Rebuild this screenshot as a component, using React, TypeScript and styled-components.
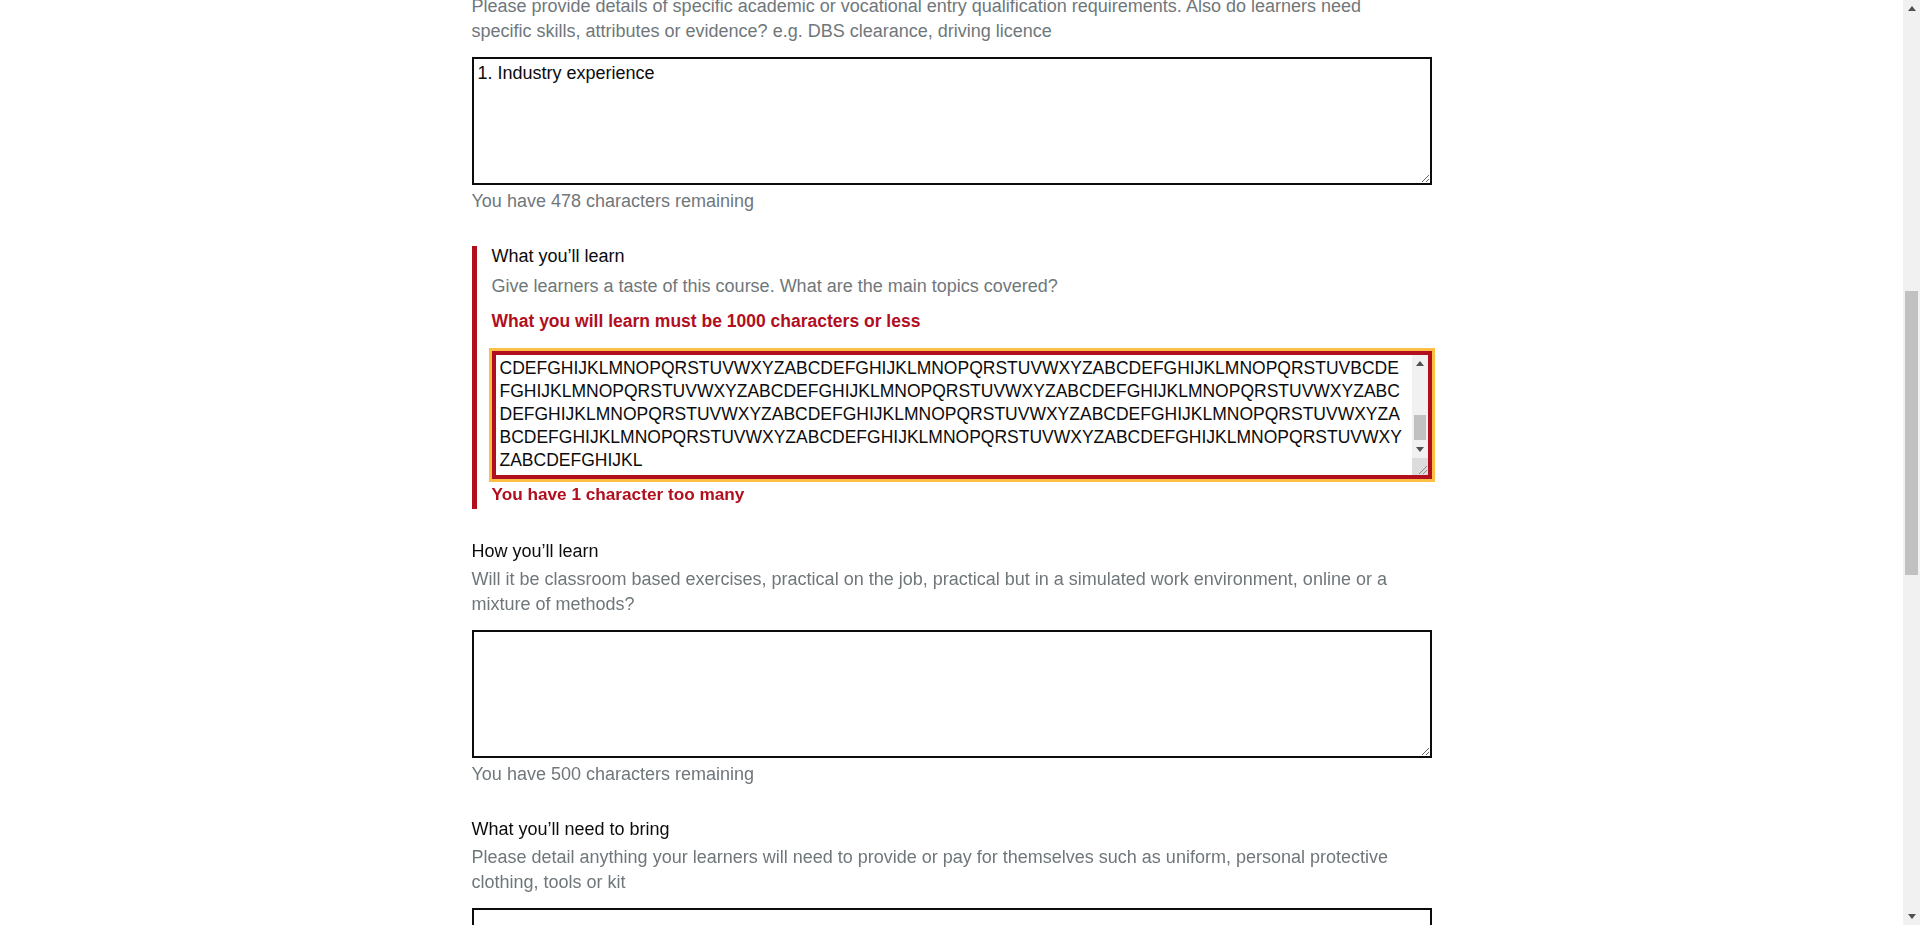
import React, { useLayoutEffect, useRef } from 'react'
import styled, { createGlobalStyle, css } from 'styled-components'

const GlobalStyle = createGlobalStyle`
  html, body {
    margin     : 0;
    padding    : 0;
    background : #ffffff;
    overflow   : hidden;
  }
  body {
    font-family : "Liberation Sans", Arial, sans-serif;
    font-size   : 18px;
    line-height : 25px;
    color       : #0b0c0c;
  }
`

// browser-like frame: scrolled page on the left, scrollbar on the right
const Frame = styled.div`
  display : flex;
  height  : 100vh;
`
const Viewport = styled.div`
  flex      : 1;
  min-width : 0;
  overflow  : hidden;
`
const ScrollBar = styled.div<{ $width: number }>`
  flex           : none;
  width          : ${ (p) => p.$width }px;
  background     : #f1f1f1;
  display        : flex;
  flex-direction : column;
`
const ScrollArrow = styled.div`
  flex            : none;
  height          : 17px;
  display         : flex;
  align-items     : center;
  justify-content : center;
`
const ScrollTrack = styled.div<{ $before: number, $after: number }>`
  flex           : 1;
  display        : flex;
  flex-direction : column;
  padding        : ${ (p) => `${ p.$before }px 2px ${ p.$after }px` };
`
const ScrollThumb = styled.div<{ $size: number }>`
  height     : ${ (p) => p.$size }px;
  background : #c1c1c1;
`
const ResizeCorner = styled.div`
  flex            : none;
  height          : 17px;
  background      : #dcdcdc;
  display         : flex;
  align-items     : flex-end;
  justify-content : flex-end;
`

const Arrow = ({ down }: { down?: boolean }) => (
  <svg width="8" height="5" viewBox="0 0 8 5">
    <path d={ down ? 'M0 0h8L4 5z' : 'M0 5h8L4 0z' } fill="#505050" />
  </svg>
)

const Header = styled.header`
  background  : #0b0c0c;
  color       : #ffffff;
  height      : 60px;
  display     : flex;
  align-items : center;
`
const HeaderInner = styled.div`
  width       : 960px;
  margin      : 0 auto;
  font-weight : 700;
  font-size   : 28px;
`
const Page = styled.main`
  width   : 960px;
  margin  : 0 auto;
  padding : 30px 0 60px;
`
const BackLink = styled.a`
  display         : inline-block;
  color           : #0b0c0c;
  font-size       : 16px;
  margin-bottom   : 30px;
  text-decoration : underline;
`
const Heading = styled.h1`
  font-size   : 36px;
  line-height : 40px;
  font-weight : 700;
  margin      : 0 0 40px;
`
const FormGroup = styled.div<{ $error?: boolean }>`
  margin-bottom : 30px;
  ${ (p) => p.$error && css`
    margin-top     : 32px;
    border-left    : 5px solid #b10e1e;
    padding-left   : 15px;
    padding-bottom : 2px;
  ` }
`
const Label = styled.label<{ $error?: boolean }>`
  display       : block;
  margin-bottom : 3px;
  ${ (p) => p.$error && css`
    line-height   : 21px;
    margin-bottom : 7px;
  ` }
`
const Hint = styled.span<{ $error?: boolean }>`
  display       : block;
  max-width     : 940px;
  color         : #6f777b;
  margin-bottom : ${ (p) => (p.$error ? '10px' : '13px') };
`
const ErrorMessage = styled.span`
  display       : block;
  color         : #b10e1e;
  font-weight   : 700;
  font-size     : 17.5px;
  margin-bottom : 17px;
`
const Input = styled.input`
  box-sizing    : border-box;
  display       : block;
  width         : 100%;
  height        : 40px;
  border        : 2px solid #0b0c0c;
  border-radius : 0;
  padding       : 5px 4px 4px;
  font          : inherit;
`
const TextArea = styled.textarea`
  box-sizing    : border-box;
  display       : block;
  width         : 100%;
  height        : 128px;
  margin        : 0;
  border        : 2px solid #0b0c0c;
  border-radius : 0;
  padding       : 3px 4px;
  font-family   : "Liberation Sans", Arial, sans-serif;
  font-size     : 18px;
  line-height   : 23px;
  color         : #0b0c0c;
  background    : #ffffff;
  &:focus { outline : 3px solid #ffbf47; outline-offset : 0; }
`
// error state: red border, yellow focus ring, its own scrollbar column
const ErrorBox = styled.div`
  box-sizing : border-box;
  display    : flex;
  height     : 128px;
  border     : 4px solid #b10e1e;
  outline    : 3px solid #ffbf47;
  background : #ffffff;
`
const ErrorTextArea = styled(TextArea)`
  flex      : 1;
  width     : auto;
  height    : 100%;
  border    : 0;
  padding   : 3px 4px;
  font-size : 17.5px;
  overflow  : hidden;
  resize    : none;
  &:focus { outline : none; }
`
const Count = styled.span<{ $error?: boolean }>`
  display     : block;
  margin-top  : ${ (p) => (p.$error ? '3px' : '4px') };
  color       : ${ (p) => (p.$error ? '#b10e1e' : '#6f777b') };
  font-weight : ${ (p) => (p.$error ? 700 : 400) };
  font-size   : ${ (p) => (p.$error ? '17.2px' : 'inherit') };
`
const Button = styled.button`
  background  : #00823b;
  color       : #ffffff;
  border      : 0;
  box-shadow  : 0 2px 0 #003618;
  padding     : 7px 12px 6px;
  font-family : inherit;
  font-size   : 19px;
  line-height : 25px;
`

const ALPHA = 'ABCDEFGHIJKLMNOPQRSTUVWXYZ'

const VISIBLE = [
  'CDEFGHIJKLMNOPQRSTUVWXYZABCDEFGHIJKLMNOPQRSTUVWXYZABCDEFGHIJKLMNOPQRSTUVBCDE',
  'FGHIJKLMNOPQRSTUVWXYZABCDEFGHIJKLMNOPQRSTUVWXYZABCDEFGHIJKLMNOPQRSTUVWXYZABC',
  'DEFGHIJKLMNOPQRSTUVWXYZABCDEFGHIJKLMNOPQRSTUVWXYZABCDEFGHIJKLMNOPQRSTUVWXYZA',
  'BCDEFGHIJKLMNOPQRSTUVWXYZABCDEFGHIJKLMNOPQRSTUVWXYZABCDEFGHIJKLMNOPQRSTUVWXY',
  'ZABCDEFGHIJKL',
]

const buildLearnText = () => {
  const hidden: string[] = []
  let n = 0
  for (let line = 0; line < 9; line++) {
    let s = ''
    for (let i = 0; i < 72; i++) { s += ALPHA[n % 26]; n++ }
    hidden.push(s)
  }
  return [ ...hidden, ...VISIBLE ].join('\n')
}

type FieldProps = {
  id        : string
  label     : string
  hint      : string
  value?    : string
  remaining : number
}

const Field = ({ id, label, hint, value, remaining }: FieldProps) => (
  <FormGroup>
    <Label htmlFor={ id }>{ label }</Label>
    <Hint>{ hint }</Hint>
    <TextArea id={ id } defaultValue={ value } />
    <Count>You have { remaining } characters remaining</Count>
  </FormGroup>
)

export default function App() {
  const viewRef   = useRef<HTMLDivElement>(null)
  const anchorRef = useRef<HTMLTextAreaElement>(null)
  const learnRef  = useRef<HTMLTextAreaElement>(null)

  useLayoutEffect(() => {
    const learn = learnRef.current
    if (learn) {
      learn.focus({ preventScroll: true })
      const len = learn.value.length
      learn.setSelectionRange(len, len)
      learn.scrollTop = learn.scrollHeight
    }
    const view   = viewRef.current
    const anchor = anchorRef.current
    if (view && anchor) {
      const offset = anchor.getBoundingClientRect().top - view.getBoundingClientRect().top + view.scrollTop
      view.scrollTop = Math.round(offset - 57.5)
    }
  }, [])

  return (
    <>
      <GlobalStyle />
      <Frame>
        <Viewport ref={ viewRef }>
          <Header><HeaderInner>GOV.UK</HeaderInner></Header>
          <Page>
            <BackLink href="#">Back</BackLink>
            <Heading>Course details</Heading>

            <FormGroup>
              <Label htmlFor="course-name">Course name</Label>
              <Input id="course-name" defaultValue="Construction skills" />
            </FormGroup>

            <Field
              id="summary"
              label="Course summary"
              hint="Give a short overview of the course, who it is for and what learners will be able to do at the end of it."
              remaining={ 500 }
            />

            <Field
              id="who-for"
              label="Who this course is for"
              hint="Describe the kind of learner this course suits, such as people new to the industry or those looking to progress."
              remaining={ 500 }
            />

            <FormGroup>
              <Label htmlFor="entry">Entry requirements</Label>
              <Hint>
                Please provide details of specific academic or vocational entry qualification requirements. Also do learners need
                specific skills, attributes or evidence? e.g. DBS clearance, driving licence
              </Hint>
              <TextArea id="entry" ref={ anchorRef } defaultValue="1. Industry experience" />
              <Count>You have 478 characters remaining</Count>
            </FormGroup>

            <FormGroup $error>
              <Label $error htmlFor="learn">What you’ll learn</Label>
              <Hint $error>Give learners a taste of this course. What are the main topics covered?</Hint>
              <ErrorMessage>What you will learn must be 1000 characters or less</ErrorMessage>
              <ErrorBox>
                <ErrorTextArea id="learn" ref={ learnRef } defaultValue={ buildLearnText() } />
                <ScrollBar $width={ 16 }>
                  <ScrollArrow><Arrow /></ScrollArrow>
                  <ScrollTrack $before={ 43 } $after={ 1 }>
                    <ScrollThumb $size={ 25 } />
                  </ScrollTrack>
                  <ScrollArrow><Arrow down /></ScrollArrow>
                  <ResizeCorner>
                    <svg width="12" height="12" viewBox="0 0 12 12">
                      <path d="M11 3L3 11M11 7L7 11" stroke="#8a8a8a" strokeWidth="1" />
                    </svg>
                  </ResizeCorner>
                </ScrollBar>
              </ErrorBox>
              <Count $error>You have 1 character too many</Count>
            </FormGroup>

            <Field
              id="how"
              label="How you’ll learn"
              hint="Will it be classroom based exercises, practical on the job, practical but in a simulated work environment, online or a mixture of methods?"
              remaining={ 500 }
            />

            <Field
              id="bring"
              label="What you’ll need to bring"
              hint="Please detail anything your learners will need to provide or pay for themselves such as uniform, personal protective clothing, tools or kit"
              remaining={ 500 }
            />

            <Field
              id="assessed"
              label="How you’ll be assessed"
              hint="Please give details of the ways learners will be assessed, such as written exams, practical tests or a portfolio of work"
              remaining={ 500 }
            />

            <Field
              id="next"
              label="What you can do next"
              hint="Let learners know what further study or jobs this course could lead to"
              remaining={ 500 }
            />

            <Button type="button">Save and continue</Button>
          </Page>
        </Viewport>
        <ScrollBar $width={ 17 }>
          <ScrollArrow><Arrow /></ScrollArrow>
          <ScrollTrack $before={ 274 } $after={ 0 }>
            <ScrollThumb $size={ 284 } />
          </ScrollTrack>
          <ScrollArrow><Arrow down /></ScrollArrow>
        </ScrollBar>
      </Frame>
    </>
  )
}
